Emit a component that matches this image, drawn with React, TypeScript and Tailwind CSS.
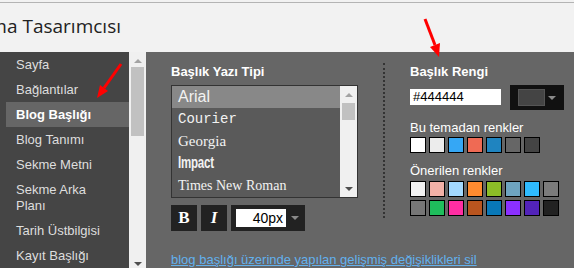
const navItems = [
  "Sayfa",
  "Bağlantılar",
  "Blog Başlığı",
  "Blog Tanımı",
  "Sekme Metni",
  "Sekme Arka Planı",
  "Tarih Üstbilgisi",
  "Kayıt Başlığı",
];

const themeColors = ["#ffffff", "#ececec", "#35a7f5", "#ef6a54", "#1f84c0", "#666666", "#444444"];

const suggested = [
  ["#f2f2f2", "#f2b1a7", "#a3d9ff", "#ff8b30", "#8cbd27", "#6ea4c0", "#2fbbff", "#7b7b7b"],
  ["#767676", "#1fbd5c", "#ff2ea3", "#b9551f", "#0878b8", "#8b30ff", "#5223b9", "#222222"],
];

function UpTri({ color = "#a3a3a3" }: { color?: string }) {
  return <div className="h-0 w-0 border-x-[4px] border-b-[4px] border-x-transparent" style={{ borderBottomColor: color }} />;
}

function DownTri({ color = "#4f4f4f" }: { color?: string }) {
  return <div className="h-0 w-0 border-x-[4px] border-t-[4px] border-x-transparent" style={{ borderTopColor: color }} />;
}

function Swatches({ colors }: { colors: string[] }) {
  return (
    <div className="flex gap-[3px]">
      {colors.map((c, i) => (
        <div key={i} className="h-4 w-4 border border-black" style={{ backgroundColor: c }} />
      ))}
    </div>
  );
}

function Arrows() {
  return (
    <svg className="pointer-events-none absolute left-0 top-0" width="574" height="268">
      <line x1="121" y1="64" x2="104" y2="88" stroke="#ff0000" strokeWidth="3" />
      <polygon points="97,98 108,91 100,85" fill="#ff0000" />
      <line x1="425" y1="19" x2="435" y2="45" stroke="#ff0000" strokeWidth="3" />
      <polygon points="439,57 440,43 430,47" fill="#ff0000" />
    </svg>
  );
}

export default function App() {
  return (
    <div className="relative h-[268px] w-[574px] overflow-hidden bg-[#f2f2f2] font-['Liberation_Sans',Arial,sans-serif]">
      <div className="h-[2px]" />
      <div className="h-px bg-[#b4b4b4]" />
      <div
        dir="rtl"
        className="h-[49px] w-[121px] whitespace-nowrap pt-[9px] font-['Open_Sans',sans-serif] text-[19px] leading-[28px] text-[#222]"
      >
        <span dir="ltr" className="inline-block">Blogger Tema Tasarımcısı</span>
      </div>

      <div className="flex h-[216px]">
        {/* sidebar */}
        <div className="w-[129px] bg-[#454545]">
          {navItems.map((item, i) => (
            <div
              key={item}
              className={
                i === 2
                  ? "ml-[6px] bg-[#666] pb-[4px] pl-[10px] pr-[24px] pt-[5px] text-[13px] font-bold leading-4 text-white"
                  : "ml-[6px] pb-[4px] pl-[10px] pr-[24px] pt-[5px] text-[13px] leading-4 text-[#dedede]"
              }
            >
              {item}
            </div>
          ))}
        </div>
        <div className="flex w-[17px] flex-col items-center bg-[#f0f0f0] pt-[7px]">
          <UpTri />
          <div className="mt-[4px] h-[69px] w-[13px] bg-[#c1c1c1]" />
          <div className="flex-1" />
          <DownTri />
          <div className="h-[2px]" />
        </div>

        {/* main panel */}
        <div className="flex-1 bg-[#666] pl-[25px] pt-[12px]">
          <div className="flex items-start">
            <div className="w-[187px]">
              <div className="text-[13px] font-bold leading-4 text-white">Başlık Yazı Tipi</div>
              <div className="mt-[5px] flex h-[113px] border border-[#333]">
                <div className="flex-1 bg-[#5a5a5a] text-[#f2f2f2]">
                  <div className="flex h-[22px] items-center bg-[#888] pl-[6px] text-[16px]">Arial</div>
                  <div className="flex h-[22px] items-center pl-[6px] font-['Liberation_Mono',monospace] text-[14px] font-light">Courier</div>
                  <div className="flex h-[22px] items-center pl-[6px] font-['Liberation_Serif',serif] text-[15px]">Georgia</div>
                  <div className="flex h-[22px] items-center pl-[6px]">
                    <span className="inline-block origin-left scale-x-[0.72] font-['Liberation_Sans',sans-serif] text-[16px] font-bold tracking-[-0.3px]">Impact</span>
                  </div>
                  <div className="flex h-[22px] items-center pl-[6px] font-['Liberation_Serif',serif] text-[14px]">Times New Roman</div>
                </div>
                <div className="flex w-[17px] flex-col items-center bg-[#f0f0f0] pb-[6px] pt-[7px]">
                  <UpTri />
                  <div className="mt-[6px] h-[17px] w-[13px] bg-[#c1c1c1]" />
                  <div className="flex-1" />
                  <DownTri />
                </div>
              </div>
              <div className="mt-[7px] flex gap-[4px]">
                <div className="flex h-[26px] w-[26px] items-center justify-center bg-[#222] font-['Liberation_Serif',serif] text-[17px] font-bold text-white">B</div>
                <div className="flex h-[26px] w-[26px] items-center justify-center bg-[#222] font-['Liberation_Serif',serif] text-[17px] font-bold italic text-white">I</div>
                <div className="flex h-[26px] w-[74px] items-center bg-[#222] pl-[5px]">
                  <div className="h-[18px] w-[50px] bg-white pr-[3px] text-right text-[14px] leading-[18px] text-black">40px</div>
                  <div className="ml-[5px]">
                    <DownTri color="#8a8a8a" />
                  </div>
                </div>
              </div>
            </div>

            <div className="ml-[25px] mt-[-1px] h-[155px] border-l-2 border-dotted border-[#333]" />

            <div className="ml-[25px]">
              <div className="text-[13px] font-bold leading-4 text-white">Başlık Rengi</div>
              <div className="mt-[5px] flex items-start">
                <div className="mt-[4px] h-[16px] w-[91px] bg-white pl-[3px] text-[13px] leading-[16px] text-black">#444444</div>
                <div className="ml-[9px] flex h-[25px] w-[54px] items-center bg-[#111] pl-[8px]">
                  <div className="h-[17px] w-[27px] border border-[#555] bg-[#444]" />
                  <div className="ml-[3px]">
                    <DownTri color="#8a8a8a" />
                  </div>
                </div>
              </div>
              <div className="mt-[10px] text-[13px] leading-4 text-white">Bu temadan renkler</div>
              <div className="mt-[1px]">
                <Swatches colors={themeColors} />
              </div>
              <div className="mt-[10px] text-[13px] leading-4 text-white">Önerilen renkler</div>
              <div className="mt-[2px]">
                <Swatches colors={suggested[0]} />
              </div>
              <div className="mt-[3px]">
                <Swatches colors={suggested[1]} />
              </div>
            </div>
          </div>
          <div className="mt-[21px] text-[13px] leading-4 text-[#62b1ee] underline">
            blog başlığı üzerinde yapılan gelişmiş değişiklikleri sil
          </div>
        </div>
      </div>
      <Arrows />
    </div>
  );
}
